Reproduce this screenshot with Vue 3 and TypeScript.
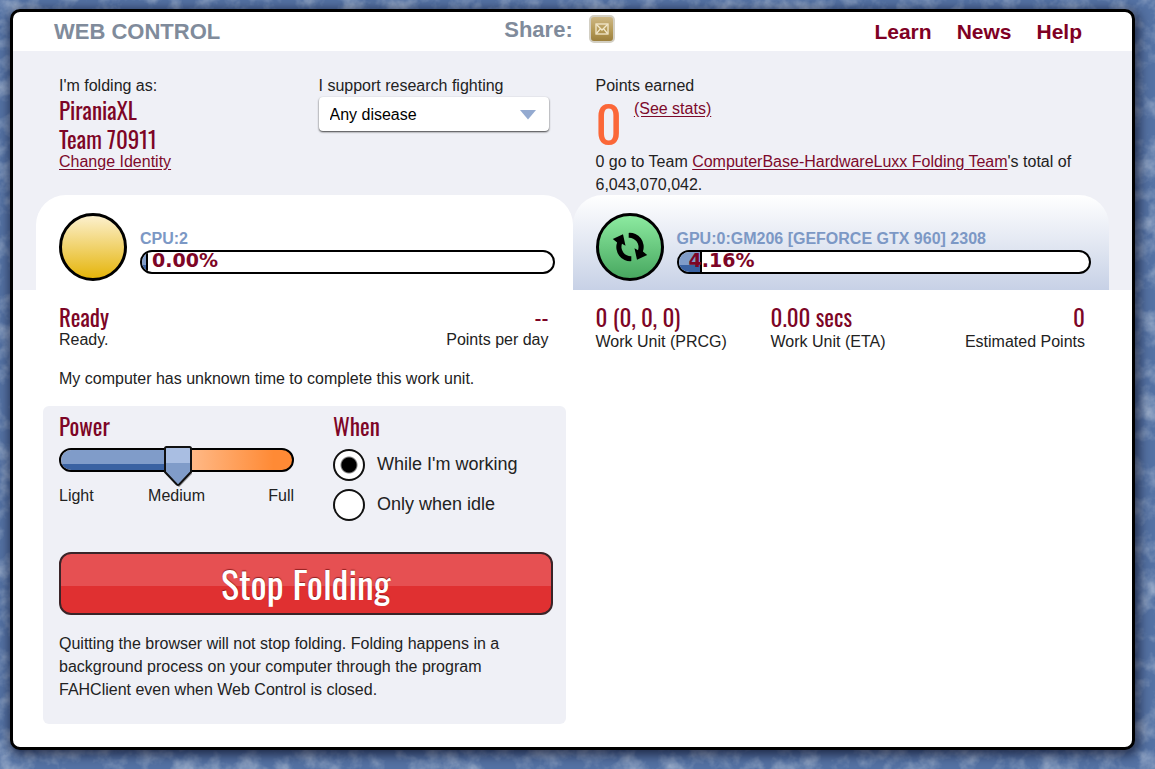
<script setup lang="ts">
import { computed, ref } from 'vue'

interface Slot {
  id: string
  name: string
  percent: number
  running: boolean
}

const slots: Slot[] = [
  { id: 'cpu', name: 'CPU:2', percent: 0, running: false },
  { id: 'gpu', name: 'GPU:0:GM206 [GEFORCE GTX 960] 2308', percent: 4.16, running: true },
]
const links = ['Learn', 'News', 'Help']
const diseases = ['Any disease', "Alzheimer's", 'Cancer', "Huntington's", "Parkinson's"]

const disease = ref('Any disease')
const power = ref(1)
const when = ref('working')
const folding = ref(true)

const powerPercent = computed(() => power.value * 50)
const fillWidth = (percent: number) => `calc(6px + ${percent}%)`
</script>

<template>
  <div class="page">
    <svg class="texture" aria-hidden="true">
      <filter id="clouds" x="0" y="0" width="100%" height="100%">
        <feTurbulence type="fractalNoise" baseFrequency="0.05" numOctaves="4" seed="8" />
        <feColorMatrix values="0 0 0 0 0.6  0 0 0 0 0.67  0 0 0 0 0.78  1.2 0 0 0 -0.5" />
      </filter>
      <rect width="100%" height="100%" filter="url(#clouds)" />
    </svg>

    <main class="window">
      <header class="topbar">
        <h1>WEB CONTROL</h1>
        <div class="share">
          <span>Share:</span>
          <button type="button" class="mail" aria-label="Share by email">
            <svg width="14" height="12" viewBox="0 0 14 12" fill="none" stroke="#f3e9cb" stroke-width="1.3">
              <rect x="1" y="1" width="12" height="10" />
              <path d="M1.500 1.500 7 7l5.500-5.500M1.500 10.500 5.300 5.800M12.500 10.500 8.700 5.800" />
            </svg>
          </button>
        </div>
        <nav>
          <a v-for="link in links" :key="link" href="#">{{ link }}</a>
        </nav>
      </header>

      <section class="summary">
        <div class="half">
          <div class="identity">
            <p class="label">I'm folding as:</p>
            <p class="display">PiraniaXL</p>
            <p class="display">Team 70911</p>
            <a class="caption" href="#">Change Identity</a>
          </div>
          <div class="support">
            <label class="label" for="disease">I support research fighting</label>
            <div class="select">
              <select id="disease" v-model="disease">
                <option v-for="d in diseases" :key="d">{{ d }}</option>
              </select>
              <svg width="16" height="10" viewBox="0 0 16 10" aria-hidden="true">
                <path d="M0 0h16L8 9.500z" fill="#94aad0" />
              </svg>
            </div>
          </div>
        </div>
        <div class="points">
          <p class="label">Points earned</p>
          <div class="earned">
            <span class="total">0</span>
            <a href="#">(See stats)</a>
          </div>
          <p class="team">
            0 go to Team <a href="#">ComputerBase-HardwareLuxx Folding Team</a>'s total of 6,043,070,042.
          </p>
        </div>
      </section>

      <section class="tabs">
        <div v-for="slot in slots" :key="slot.id" class="tab" :class="slot.id">
          <span class="status">
            <svg v-if="slot.running" width="36" height="30" viewBox="0 0 36 30" aria-hidden="true">
              <path d="M16.700 .9A14 14 0 0 1 30.900 19.500L35.200 23 25 27.700 22.500 16.300 26 18.200A9.300 9.300 0 0 0 16.700 5.800z" />
              <path d="M19.300 29.100A14 14 0 0 1 5.100 10.500L.8 7 11 2.300 13.500 13.700 10 11.800A9.300 9.300 0 0 0 19.300 24.200z" />
            </svg>
          </span>
          <div class="progress">
            <h2 :id="slot.id">{{ slot.name }}</h2>
            <div class="bar" role="progressbar" :aria-valuenow="slot.percent" :aria-labelledby="slot.id">
              <div class="fill" :style="{ width: fillWidth(slot.percent) }"></div>
              <span class="percent">{{ slot.percent.toFixed(2) }}%</span>
            </div>
          </div>
        </div>
      </section>

      <section class="details">
        <div class="left">
          <div class="stats">
            <div>
              <p class="display">Ready</p>
              <p class="caption">Ready.</p>
            </div>
            <div class="end">
              <p class="display">--</p>
              <p class="caption">Points per day</p>
            </div>
          </div>
          <p class="message">My computer has unknown time to complete this work unit.</p>

          <div class="panel">
            <div class="settings">
              <div class="power">
                <label class="display" for="power">Power</label>
                <div class="slider">
                  <div class="level" :style="{ width: powerPercent + '%' }"></div>
                  <svg class="thumb" :style="{ left: powerPercent + '%' }" width="34" height="44" viewBox="0 0 34 44" aria-hidden="true">
                    <path d="M5 4h26v25L18.500 42h-1L5 29z" fill="#000" opacity=".3" />
                    <path d="M5 2h24q1 0 1 1v24L18.200 39.500q-1.200 1-2.400 0L4 27V3q0-1 1-1z" fill="#809cc9" />
                    <path d="M5 3h24v15H5z" fill="#a9bee2" />
                    <path d="M5.500 2h23q1.500 0 1.500 1.500V27L18.200 39.500q-1.200 1-2.400 0L4 27V3.500Q4 2 5.500 2z" fill="none" stroke="#111" stroke-width="2" />
                  </svg>
                  <input id="power" v-model.number="power" type="range" min="0" max="2" />
                </div>
                <div class="ticks"><span>Light</span><span>Medium</span><span>Full</span></div>
              </div>
              <fieldset>
                <legend class="display">When</legend>
                <label class="option"><input v-model="when" type="radio" name="when" value="working" />While I'm working</label>
                <label class="option"><input v-model="when" type="radio" name="when" value="idle" />Only when idle</label>
              </fieldset>
            </div>
            <button type="button" class="stop" @click="folding = !folding">
              {{ folding ? 'Stop Folding' : 'Start Folding' }}
            </button>
            <p class="note">
              Quitting the browser will not stop folding. Folding happens in a background process on your
              computer through the program FAHClient even when Web Control is closed.
            </p>
          </div>
        </div>

        <div class="right stats">
          <div>
            <p class="display">0 (0, 0, 0)</p>
            <p class="caption">Work Unit (PRCG)</p>
          </div>
          <div>
            <p class="display">0.00 secs</p>
            <p class="caption">Work Unit (ETA)</p>
          </div>
          <div class="end">
            <p class="display">0</p>
            <p class="caption">Estimated Points</p>
          </div>
        </div>
      </section>
    </main>
  </div>
</template>

<style>
html {
  background: #5876a8;
}
body {
  margin: 0;
}
</style>

<style scoped>
* {
  box-sizing: border-box;
}
.page {
  position: relative;
  min-height: 100vh;
  padding: 9px 20px 19px 10px;
  overflow: hidden;
  background: #5472a4;
  color: #222;
  font: 16px/22px "Liberation Sans", Arial, sans-serif;
}
.texture {
  position: absolute;
  inset: 0;
  width: 100%;
  height: 100%;
}
.window {
  position: relative;
  border: 3px solid #000;
  border-radius: 10px;
  padding-bottom: 23px;
  background: #fff;
  box-shadow: 2px 3px 12px 2px rgba(0, 0, 20, 0.65);
}
p,
h1,
h2 {
  margin: 0;
}
a {
  color: #7d0a2b;
  text-underline-offset: 2px;
}
.topbar {
  display: grid;
  grid-template-columns: 1fr auto 1fr;
  height: 39px;
  padding: 0 50px 0 41px;
  font-size: 22px;
  font-weight: bold;
  color: #808b9b;
}
.topbar h1 {
  font-size: 22px;
  line-height: 39px;
}
.share {
  display: flex;
  gap: 16px;
  margin-right: 17px;
  line-height: 35px;
}
.mail {
  display: grid;
  place-items: center;
  width: 26px;
  height: 28px;
  margin-top: 3px;
  padding: 0;
  border: 2px solid #d3cfc3;
  border-radius: 5px;
  background: linear-gradient(#cdb785, #b59a56 55%, #9c7f3c);
}
nav {
  display: flex;
  justify-content: flex-end;
  gap: 25px;
  font-size: 21px;
  line-height: 39px;
}
nav a {
  color: #7f0024;
  text-decoration: none;
}
.summary {
  display: grid;
  grid-template-columns: 1fr 1fr;
  min-height: 144px;
  padding: 24px 23px 0;
  background: #eff0f6;
}
.half {
  display: flex;
  justify-content: space-between;
  padding: 0 24px 0 23px;
}
.label {
  display: block;
  line-height: 22px;
}
.display {
  display: block;
  color: #7d0526;
  font-family: Oswald, "Liberation Sans Narrow", "Liberation Sans", sans-serif;
  font-size: 23px;
  line-height: 29px;
}
.caption {
  display: block;
  line-height: 18px;
}
.identity .label {
  line-height: 21px;
}
.identity .caption {
  line-height: 16px;
}
.support {
  width: 230px;
}
.select {
  position: relative;
}
.select select {
  display: block;
  appearance: none;
  width: 100%;
  height: 34px;
  padding: 1px 11px 0;
  border: 0;
  border-radius: 4px;
  background: #fff;
  box-shadow: 0 1px 2px rgba(0, 0, 0, 0.75);
  color: #000;
  font: inherit;
}
.select svg {
  position: absolute;
  right: 13px;
  top: 13px;
  pointer-events: none;
}
.points {
  padding: 0 10px 0 23px;
}
.earned {
  display: flex;
  align-items: flex-start;
  gap: 12px;
  height: 53px;
}
.earned a {
  line-height: 24px;
}
.total {
  color: #fb6738;
  font: 51px/50px Oswald, "Liberation Sans Narrow", "Liberation Sans", sans-serif;
}
.team {
  height: 45px;
  line-height: 23px;
}
.tabs {
  display: grid;
  grid-template-columns: 1fr 1fr;
  padding: 0 23px;
  background: #eff0f6;
}
.tab {
  display: flex;
  gap: 13px;
  height: 95px;
  padding: 18px 18px 0 23px;
  border-radius: 30px 30px 0 0;
  background: #fff;
}
.tab.gpu {
  background: linear-gradient(#fff, #c7d1e6);
}
.status {
  display: grid;
  place-items: center;
  flex: none;
  width: 68px;
  height: 68px;
  border: 3px solid #000;
  border-radius: 50%;
  background: linear-gradient(#fcf0cd, #e5b50b);
}
.gpu .status {
  background: linear-gradient(#8ceaa0, #48a860);
}
.progress {
  flex: 1;
  padding-top: 18px;
}
.progress h2 {
  margin-bottom: 3px;
  color: #7c98c5;
  font-size: 16px;
  line-height: 16px;
}
.bar {
  position: relative;
  height: 24px;
  border: 2px solid #000;
  border-radius: 12px;
  overflow: hidden;
  background: #fff;
}
.fill {
  height: 100%;
  border-right: 2px solid #000;
  background: linear-gradient(#809cc9 65%, #3a62a2 65%);
}
.percent {
  position: absolute;
  left: 10px;
  top: 0;
  color: #7d0526;
  font: bold 19px/17px "DejaVu Sans", Verdana, sans-serif;
}
.details {
  display: grid;
  grid-template-columns: 1fr 1fr;
  padding: 13px 23px 0;
}
.details .stats .display {
  line-height: 28px;
}
.left .stats {
  display: flex;
  justify-content: space-between;
  padding: 0 24px 0 23px;
}
.end {
  text-align: right;
}
.message {
  margin: 19px 0 16px 23px;
}
.panel {
  margin: 0 7px;
  padding: 6px 13px 23px 16px;
  border-radius: 6px;
  background: #eff0f6;
}
.settings {
  display: flex;
  gap: 39px;
  min-height: 140px;
}
.power {
  width: 235px;
}
.slider {
  position: relative;
  height: 24px;
  margin-top: 7px;
  border: 2px solid #000;
  border-radius: 12px;
  background: linear-gradient(90deg, #ffe0c8, #ffb885 57%, #ff8a35 92%);
}
.level {
  height: 100%;
  border-radius: 10px 0 0 10px;
  background: linear-gradient(#809cc9 70%, #3a62a2 70%);
}
.thumb {
  position: absolute;
  top: -5px;
  margin-left: -16px;
}
.slider input {
  position: absolute;
  inset: 0;
  width: 100%;
  height: 100%;
  margin: 0;
  opacity: 0;
}
.ticks {
  display: grid;
  grid-template-columns: 1fr auto 1fr;
  margin-top: 13px;
}
.ticks span:last-child {
  text-align: right;
}
fieldset {
  margin: 0;
  padding: 0;
  border: 0;
}
legend {
  padding: 0;
}
.option {
  display: flex;
  gap: 12px;
  margin-top: 8px;
  font-size: 18px;
  line-height: 30px;
}
.option input {
  appearance: none;
  width: 32px;
  height: 32px;
  margin: 0;
  border: 2px solid #111;
  border-radius: 50%;
  background: #fff;
}
.option input:checked {
  background: radial-gradient(circle, #000 7px, #fff 9px);
}
.stop {
  display: block;
  width: 100%;
  height: 63px;
  padding: 0;
  border: 2px solid #3a2428;
  border-radius: 12px;
  background: linear-gradient(#e65052 55%, #e03031 55%);
  color: #fff;
  font: 38px/59px Oswald, "Liberation Sans Narrow", "Liberation Sans", sans-serif;
  text-shadow: 0 -1px 1px rgba(90, 0, 0, 0.6);
}
.note {
  margin-top: 17px;
  padding-right: 16px;
  line-height: 23px;
}
.right.stats {
  display: grid;
  grid-template-columns: 175px auto 1fr;
  align-content: start;
  padding: 0 24px 0 23px;
}
.right .caption {
  margin-top: 2px;
}
</style>
